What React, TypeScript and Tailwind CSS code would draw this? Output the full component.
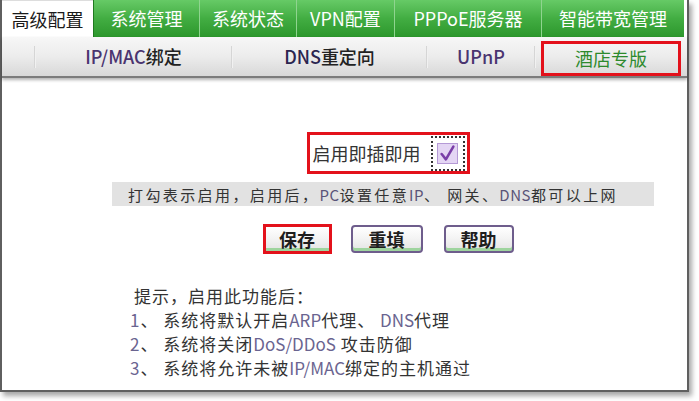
import React from 'react';

const font = { fontFamily: '"Noto Sans CJK SC", "Liberation Sans", sans-serif' };

const mainTabs = [
  { label: '系统管理', w: 'w-[105px]' },
  { label: '系统状态', w: 'w-[97px]' },
  { label: 'VPN配置', w: 'w-[98px]' },
  { label: 'PPPoE服务器', w: 'w-[147px]' },
  { label: '智能带宽管理', w: 'flex-1' },
];

const Sep = () => <div className="w-[2px] h-[22px] bg-gradient-to-r from-[#c8c8c8] to-white" />;

const Btn = ({ label }: { label: string }) => (
  <button className="h-[28px] w-full rounded-[4px] border-2 border-[#6e5d8c] bg-gradient-to-b from-white via-[#f3f3f3] to-[#e3e3e3] text-[18px] font-semibold text-[#1e1e1e] leading-none shadow-[inset_0_-3px_0_#9ed49e]">
    {label}
  </button>
);

const App: React.FC = () => {
  return (
    <div className="w-[699px] h-[401px] bg-white" style={font}>
      <div className="w-[689px] h-[392px] border-l-2 border-r-2 border-b-2 border-[#5f5f5f] shadow-[3px_4px_5px_rgba(0,0,0,0.35)] bg-white flex flex-col">
        {/* main tab bar */}
        <div className="flex h-[37px] pr-[3px]">
          <div className="w-[91px] flex items-center justify-center text-[18px] text-[#1a1a1a] bg-white border-t border-[#ddd]">
            高级配置
          </div>
          <div className="flex-1 flex bg-gradient-to-b from-[#66ca66] via-[#42ad42] to-[#2c972c] border-l border-[#1f7a1f]">
            {mainTabs.map((t, i) => (
              <div
                key={t.label}
                className={`${t.w} flex items-center justify-center text-[18px] text-white ${i > 0 ? 'border-l border-[#8fd48f]' : ''}`}
              >
                {t.label}
              </div>
            ))}
          </div>
        </div>

        {/* sub nav */}
        <div className="flex items-center h-[41px] bg-gradient-to-b from-[#f7f7f7] via-[#ececec] to-[#d8d8d8] border-b-2 border-[#7c7c7c] shadow-[0_2px_3px_rgba(0,0,0,0.3)] text-[18px] font-medium text-[#222]">
          <div className="w-[32px]" />
          <Sep />
          <div className="w-[195px] text-center">
            <span className="text-[#4a3470]">IP/MAC</span>绑定
          </div>
          <Sep />
          <div className="w-[193px] text-center">
            <span className="text-[#2b2550]">DNS</span>重定向
          </div>
          <Sep />
          <div className="w-[106px] text-center text-[#4a3470]">UPnP</div>
          <Sep />
          <div className="flex-1 h-full pl-[5px] pr-[6px] pt-[4px]">
            <div className="h-full border-[3px] border-[#e3111b] flex items-center justify-center text-[#2d8a2d] font-normal">
              酒店专版
            </div>
          </div>
        </div>

        {/* content */}
        <div className="ml-[110px] w-[542px] flex flex-col items-center pt-[54px]">
          <div className="ml-[10px] flex items-center h-[42px] border-[3px] border-[#e3111b] pl-[3px] pr-[2px]">
            <span className="text-[18px] text-[#333]">启用即插即用</span>
            <div className="ml-[10px] w-[34px] h-[35px] border-2 border-dotted border-[#333] flex items-center justify-center">
              <div className="w-[21px] h-[21px] border border-[#b59ad6] bg-[#e4d6f4] flex items-center justify-center">
                <svg width="17" height="17" viewBox="0 0 16 16">
                  <path d="M2.5 8.5 L6.5 13.5 L13.5 1.5" fill="none" stroke="#7a3fa8" strokeWidth="2.4" strokeLinejoin="round" strokeLinecap="round" />
                </svg>
              </div>
            </div>
          </div>

          <div className="mt-[8px] w-full h-[24px] bg-[#e2e2e2] flex items-center pl-[16px] text-[15px] tracking-[2.4px] text-[#333] whitespace-nowrap leading-none">
            打勾表示启用，启用后，<span className="text-[#5a5478] text-[15px] tracking-[0.5px]">PC</span>设置任意<span className="text-[#5a5478] text-[15px] tracking-[0.5px]">IP</span>、 网关、 <span className="text-[#5a5478] text-[15px] tracking-[0.5px]">DNS</span>都可以上网
          </div>

          <div className="ml-[10px] mt-[18px] flex items-center gap-[19px]">
            <div className="w-[69px] border-[3px] border-[#e3111b] flex">
              <button className="h-[24px] w-full bg-gradient-to-b from-white via-[#f3f3f3] to-[#e3e3e3] text-[18px] font-semibold text-[#1e1e1e] leading-none shadow-[inset_0_-3px_0_#9ed49e]">
                保存
              </button>
            </div>
            <div className="w-[72px]">
              <Btn label="重填" />
            </div>
            <div className="w-[70px] ml-[2px]">
              <Btn label="帮助" />
            </div>
          </div>
        </div>

        <div className="ml-[128px] mt-[30px] text-[17px] tracking-[1px] text-[#333] leading-[24px]">
          <div className="ml-[4px]">提示，启用此功能后：</div>
          <div>
            <span className="text-[#6a6490]">1</span>、 系统将默认开启<span className="text-[#6a6490] tracking-normal">ARP</span>代理、 <span className="text-[#6a6490] tracking-normal">DNS</span>代理
          </div>
          <div>
            <span className="text-[#6a6490]">2</span>、 系统将关闭<span className="text-[#6a6490] tracking-normal">DoS/DDoS</span> 攻击防御
          </div>
          <div>
            <span className="text-[#6a6490]">3</span>、 系统将允许未被<span className="text-[#6a6490] tracking-normal">IP/MAC</span>绑定的主机通过
          </div>
        </div>
      </div>
    </div>
  );
};

export default App;
